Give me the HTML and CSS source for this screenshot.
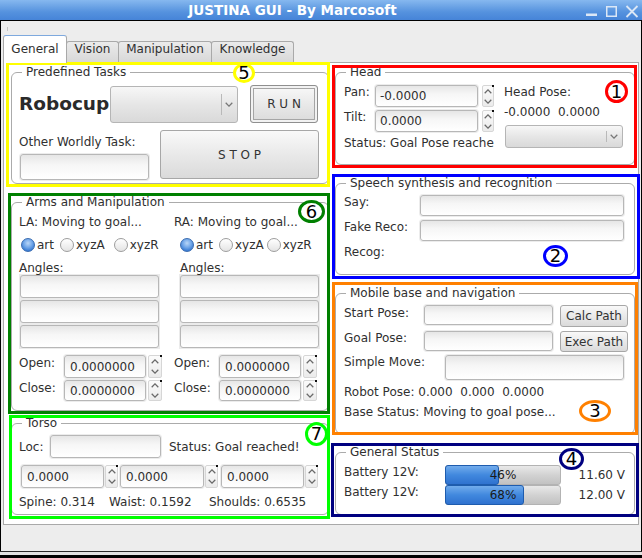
FILE: index.html
```html
<!DOCTYPE html>
<html>
<head>
<meta charset="utf-8">
<title>JUSTINA GUI - By Marcosoft</title>
<link rel="stylesheet" href="styles.css">
</head>
<body>
<div class="window">
  <div class="titlebar">
    <div class="title">JUSTINA GUI - By Marcosoft</div>
    <svg class="wbtns" width="57" height="20" viewBox="0 0 57 20">
      <rect x="1" y="13.5" width="11" height="2.5" fill="#dbe7f6"/>
      <rect x="21.75" y="6.75" width="9.5" height="9.5" fill="none" stroke="#dbe7f6" stroke-width="1.5"/>
      <path d="M41.5 6 L52.5 17 M52.5 6 L41.5 17" stroke="#dbe7f6" stroke-width="1.8" fill="none"/>
    </svg>
  </div>
  <div class="client">
    <div class="tabs">
      <div class="tab active t-general">General</div>
      <div class="tab t-vision">Vision</div>
      <div class="tab t-manip">Manipulation</div>
      <div class="tab t-know">Knowledge</div>
    </div>
    <div class="pane">
      <div class="col col-left">
        <fieldset class="grp tasks">
          <legend>Predefined Tasks</legend>
          <div class="gbody">
            <div class="tasks-top">
              <div class="robocup">Robocup</div>
              <div class="combo c-task"><span class="sep"></span><svg class="chev" width="8" height="5" viewBox="0 0 8 5"><path d="M0.7 0.8 L4 4.1 L7.3 0.8" fill="none" stroke="#777" stroke-width="1.3"/></svg></div>
              <div class="btn btn-run">R U N</div>
            </div>
            <div class="tasks-bottom">
              <div class="other">
                <div class="other-lbl">Other Worldly Task:</div>
                <div class="inp other-inp"></div>
              </div>
              <div class="btn btn-stop">S T O P</div>
            </div>
          </div>
        </fieldset>

        <fieldset class="grp arms">
          <legend>Arms and Manipulation</legend>
          <div class="gbody arms-body">
            <div class="arm arm-la">
              <div class="line">LA: Moving to goal...</div>
              <div class="radios">
                <span class="ritem"><span class="radio on"></span>art</span>
                <span class="ritem r2"><span class="radio"></span>xyzA</span>
                <span class="ritem r3"><span class="radio"></span>xyzR</span>
              </div>
              <div class="angles-lbl">Angles:</div>
              <div class="angles-box">
                <div class="inp ang"></div>
                <div class="inp ang"></div>
                <div class="inp ang"></div>
              </div>
              <div class="oc-row open-row">
                <div class="oc-lbl">Open:</div>
                <div class="spin s-arm"><div class="field">0.0000000</div><div class="arrows"><svg width="8" height="5" viewBox="0 0 8 5"><path d="M0.7 4.2 L4 0.9 L7.3 4.2" fill="none" stroke="#6a6a6a" stroke-width="1.3"/></svg><svg width="8" height="5" viewBox="0 0 8 5"><path d="M0.7 0.8 L4 4.1 L7.3 0.8" fill="none" stroke="#6a6a6a" stroke-width="1.3"/></svg></div></div>
              </div>
              <div class="oc-row close-row">
                <div class="oc-lbl">Close:</div>
                <div class="spin s-arm s-short"><div class="field">0.0000000</div><div class="arrows"><svg width="8" height="5" viewBox="0 0 8 5"><path d="M0.7 4.2 L4 0.9 L7.3 4.2" fill="none" stroke="#6a6a6a" stroke-width="1.3"/></svg><svg width="8" height="5" viewBox="0 0 8 5"><path d="M0.7 0.8 L4 4.1 L7.3 0.8" fill="none" stroke="#6a6a6a" stroke-width="1.3"/></svg></div></div>
              </div>
            </div>
            <div class="arm arm-ra">
              <div class="line">RA: Moving to goal...</div>
              <div class="radios">
                <span class="ritem"><span class="radio on"></span>art</span>
                <span class="ritem r2"><span class="radio"></span>xyzA</span>
                <span class="ritem r3"><span class="radio"></span>xyzR</span>
              </div>
              <div class="angles-lbl">Angles:</div>
              <div class="angles-box">
                <div class="inp ang"></div>
                <div class="inp ang"></div>
                <div class="inp ang"></div>
              </div>
              <div class="oc-row open-row">
                <div class="oc-lbl">Open:</div>
                <div class="spin s-arm"><div class="field">0.0000000</div><div class="arrows"><svg width="8" height="5" viewBox="0 0 8 5"><path d="M0.7 4.2 L4 0.9 L7.3 4.2" fill="none" stroke="#6a6a6a" stroke-width="1.3"/></svg><svg width="8" height="5" viewBox="0 0 8 5"><path d="M0.7 0.8 L4 4.1 L7.3 0.8" fill="none" stroke="#6a6a6a" stroke-width="1.3"/></svg></div></div>
              </div>
              <div class="oc-row close-row">
                <div class="oc-lbl">Close:</div>
                <div class="spin s-arm s-short"><div class="field">0.0000000</div><div class="arrows"><svg width="8" height="5" viewBox="0 0 8 5"><path d="M0.7 4.2 L4 0.9 L7.3 4.2" fill="none" stroke="#6a6a6a" stroke-width="1.3"/></svg><svg width="8" height="5" viewBox="0 0 8 5"><path d="M0.7 0.8 L4 4.1 L7.3 0.8" fill="none" stroke="#6a6a6a" stroke-width="1.3"/></svg></div></div>
              </div>
            </div>
          </div>
        </fieldset>

        <fieldset class="grp torso">
          <legend>Torso</legend>
          <div class="gbody">
            <div class="frow">
              <div class="loc-lbl">Loc:</div>
              <div class="inp loc-inp"></div>
              <div class="torso-status">Status: Goal reached!</div>
            </div>
            <div class="frow torso-spins">
              <div class="spin s-t1"><div class="field">0.0000</div><div class="arrows"><svg width="8" height="5" viewBox="0 0 8 5"><path d="M0.7 4.2 L4 0.9 L7.3 4.2" fill="none" stroke="#6a6a6a" stroke-width="1.3"/></svg><svg width="8" height="5" viewBox="0 0 8 5"><path d="M0.7 0.8 L4 4.1 L7.3 0.8" fill="none" stroke="#6a6a6a" stroke-width="1.3"/></svg></div></div>
              <div class="spin s-t2"><div class="field">0.0000</div><div class="arrows"><svg width="8" height="5" viewBox="0 0 8 5"><path d="M0.7 4.2 L4 0.9 L7.3 4.2" fill="none" stroke="#6a6a6a" stroke-width="1.3"/></svg><svg width="8" height="5" viewBox="0 0 8 5"><path d="M0.7 0.8 L4 4.1 L7.3 0.8" fill="none" stroke="#6a6a6a" stroke-width="1.3"/></svg></div></div>
              <div class="spin s-t3"><div class="field">0.0000</div><div class="arrows"><svg width="8" height="5" viewBox="0 0 8 5"><path d="M0.7 4.2 L4 0.9 L7.3 4.2" fill="none" stroke="#6a6a6a" stroke-width="1.3"/></svg><svg width="8" height="5" viewBox="0 0 8 5"><path d="M0.7 0.8 L4 4.1 L7.3 0.8" fill="none" stroke="#6a6a6a" stroke-width="1.3"/></svg></div></div>
            </div>
            <div class="frow torso-vals">
              <span class="tv-spine">Spine: 0.314</span>
              <span class="tv-waist">Waist: 0.1592</span>
              <span>Shoulds: 0.6535</span>
            </div>
          </div>
        </fieldset>
      </div>

      <div class="col col-right">
        <fieldset class="grp head">
          <legend>Head</legend>
          <div class="gbody head-body">
            <div class="head-left">
              <div class="frow">
                <div class="hl">Pan:</div>
                <div class="spin s-head"><div class="field">-0.0000</div><div class="arrows"><svg width="8" height="5" viewBox="0 0 8 5"><path d="M0.7 4.2 L4 0.9 L7.3 4.2" fill="none" stroke="#6a6a6a" stroke-width="1.3"/></svg><svg width="8" height="5" viewBox="0 0 8 5"><path d="M0.7 0.8 L4 4.1 L7.3 0.8" fill="none" stroke="#6a6a6a" stroke-width="1.3"/></svg></div></div>
              </div>
              <div class="frow tilt-row">
                <div class="hl">Tilt:</div>
                <div class="spin s-head"><div class="field">0.0000</div><div class="arrows"><svg width="8" height="5" viewBox="0 0 8 5"><path d="M0.7 4.2 L4 0.9 L7.3 4.2" fill="none" stroke="#6a6a6a" stroke-width="1.3"/></svg><svg width="8" height="5" viewBox="0 0 8 5"><path d="M0.7 0.8 L4 4.1 L7.3 0.8" fill="none" stroke="#6a6a6a" stroke-width="1.3"/></svg></div></div>
              </div>
              <div class="head-status">Status: Goal Pose reache</div>
            </div>
            <div class="head-right">
              <div>Head Pose:</div>
              <div class="hp-vals">-0.0000  0.0000</div>
              <div class="combo c-head"><span class="sep"></span><svg class="chev" width="8" height="5" viewBox="0 0 8 5"><path d="M0.7 0.8 L4 4.1 L7.3 0.8" fill="none" stroke="#777" stroke-width="1.3"/></svg></div>
            </div>
          </div>
        </fieldset>

        <fieldset class="grp speech">
          <legend>Speech synthesis and recognition</legend>
          <div class="gbody">
            <div class="frow">
              <div class="sl">Say:</div>
              <div class="inp say-inp"></div>
            </div>
            <div class="frow fake-row">
              <div class="sl">Fake Reco:</div>
              <div class="inp say-inp"></div>
            </div>
            <div class="recog">Recog:</div>
          </div>
        </fieldset>

        <fieldset class="grp mobile">
          <legend>Mobile base and navigation</legend>
          <div class="gbody">
            <div class="frow">
              <div class="ml">Start Pose:</div>
              <div class="inp pose-inp"></div>
              <div class="btn path-btn">Calc Path</div>
            </div>
            <div class="frow goal-row">
              <div class="ml ml0">Goal Pose:</div>
              <div class="inp pose-inp"></div>
              <div class="btn path-btn exec">Exec Path</div>
            </div>
            <div class="frow move-row">
              <div class="ml ml-wide">Simple Move:</div>
              <div class="inp move-inp"></div>
            </div>
            <div class="robot-pose">Robot Pose: 0.000  0.000  0.0000</div>
            <div class="base-status">Base Status: Moving to goal pose...</div>
          </div>
        </fieldset>

        <fieldset class="grp gstatus">
          <legend>General Status</legend>
          <div class="gbody">
            <div class="gs-row">
              <div class="gs-lbl">Battery 12V:</div>
              <div class="bar"><div class="chunk c46"></div><span class="bar-txt">46%</span></div>
              <div class="gs-val">11.60 V</div>
            </div>
            <div class="gs-row">
              <div class="gs-lbl">Battery 12V:</div>
              <div class="bar"><div class="chunk c68"></div><span class="bar-txt">68%</span></div>
              <div class="gs-val">12.00 V</div>
            </div>
          </div>
        </fieldset>
      </div>

      <div class="ann a-yellow"></div>
      <div class="ann a-dgreen"></div>
      <div class="ann a-lgreen"></div>
      <div class="ann a-red"></div>
      <div class="ann a-blue"></div>
      <div class="ann a-orange"></div>
      <div class="ann a-navy"></div>

      <div class="num n5">5</div>
      <div class="num n1">1</div>
      <div class="num n6">6</div>
      <div class="num n2">2</div>
      <div class="num n3">3</div>
      <div class="num n4">4</div>
      <div class="num n7">7</div>
    </div>
  </div>
  <div class="frame-bottom"></div>
</div>
</body>
</html>
```

FILE: styles.css
```css
* { box-sizing: border-box; }

body {
  margin: 0;
  font-family: "DejaVu Sans", "Liberation Sans", sans-serif;
  font-size: 12px;
  line-height: 14px;
  color: #303030;
  background: #ededed;
}

.window {
  width: 642px;
  height: 558px;
  background: #ededed;
  overflow: hidden;
}

/* title bar */
.titlebar {
  height: 21px;
  display: flex;
  background: linear-gradient(#86b8ef, #5592de 60%, #4684d8);
  border-bottom: 1px solid #000;
}
.title {
  width: 585px;
  text-align: center;
  color: #fff;
  font-weight: bold;
  font-size: 13.5px;
  line-height: 20px;
}
.wbtns { display: block; }

/* client */
.client {
  height: 530px;
  border-left: 1px solid #000;
  border-right: 1px solid #000;
  padding: 14px 0 0 2px;
  background: linear-gradient(#c4c4c4, #c4c4c4) 6px 6px / 1px 4px no-repeat, #ededed;
}

.tabs {
  display: flex;
  align-items: flex-end;
  height: 28px;
  margin-bottom: -1px;
  position: relative;
  z-index: 1;
}
.tab {
  height: 21px;
  margin-bottom: 1px;
  border: 1px solid #a9a9a9;
  border-bottom: none;
  border-radius: 3px 3px 0 0;
  background: linear-gradient(#ebebeb, #d8d8d8);
  text-align: center;
  line-height: 14px;
  padding-top: 0;
  margin-left: -1px;
}
.tab.active {
  height: 28px;
  margin-bottom: 0;
  margin-left: 0;
  padding-top: 6px;
  background: #fff;
  border-color: #9fb8d8 #a9a9a9 #a9a9a9 #a9a9a9;
  border-top: 1px solid #7ea9de;
  position: relative;
  z-index: 2;
}
.t-general { width: 64px; }
.t-vision { width: 53px; }
.t-manip { width: 94px; }
.t-know { width: 83px; }

.pane {
  position: relative;
  width: 636px;
  height: 463px;
  border: 1px solid #a9a9a9;
  background: #fff;
  display: flex;
  align-items: flex-start;
  padding: 2px 0 0 7px;
}

.col { display: flex; flex-direction: column; }
.col-left { width: 318px; }
.col-right { width: 300px; margin-left: 6px; }

/* group boxes */
.grp {
  margin: 0;
  padding: 0;
  min-width: 0;
  border: 1px solid #ababab;
  border-radius: 6px;
}
.grp legend {
  padding: 0 4px;
  margin-left: 10px;
  line-height: 15px;
  font-size: 12px;
}
.gbody { padding: 5px 0 0 7px; }
.col-right .gbody { padding-left: 8px; }

.tasks { height: 119px; }
.arms { height: 216px; margin-top: 11px; }
.torso { height: 99px; margin-top: 5px; }
.head { height: 100px; }
.speech { height: 99px; margin-top: 11px; }
.mobile { height: 148px; margin-top: 11px; }
.gstatus { height: 70px; margin-top: 11px; }

.speech .gbody, .mobile .gbody, .torso .gbody { padding-top: 4px; }

.frow { display: flex; align-items: flex-start; }

/* widgets */
.inp {
  border: 1px solid #b7b7b7;
  border-radius: 3px;
  background: linear-gradient(#e6e6e6, #f6f6f6 40%, #fff);
  box-shadow: 0 0 0 1px #ececec;
}
.btn {
  border: 1px solid #a7a7a7;
  border-radius: 3px;
  background: linear-gradient(#f9f9f9, #e9e9e9 50%, #dadada);
  display: flex;
  align-items: center;
  justify-content: center;
  color: #333;
  white-space: pre;
}
.combo {
  display: flex;
  align-items: center;
  justify-content: flex-end;
  border: 1px solid #b5b5b5;
  border-radius: 3px;
  background: linear-gradient(#f7f7f7, #e6e6e6 50%, #d9d9d9);
}
.combo .sep {
  width: 1px;
  align-self: stretch;
  margin: 7px 0;
  background: #b9b9b9;
}
.combo .chev { margin: 0 4px 0 3px; display: block; }

.spin { display: flex; }
.spin .field {
  flex: 1;
  border: 1px solid #b7b7b7;
  border-radius: 3px;
  background: linear-gradient(#e6e6e6, #f6f6f6 40%, #fff);
  box-shadow: 0 0 0 1px #ececec;
  padding-left: 4px;
  display: flex;
  align-items: center;
  white-space: nowrap;
  overflow: hidden;
}
.spin .arrows {
  position: relative;
  width: 14px;
  margin-left: 2px;
  border: 1px solid #d6d6d6;
  border-radius: 2px;
  background: linear-gradient(#fbfbfb, #ebebeb);
  display: flex;
  flex-direction: column;
  justify-content: space-around;
  align-items: center;
}
.spin .arrows svg { display: block; }
.spin .arrows::after {
  content: "";
  position: absolute;
  right: -1px;
  top: -1px;
  width: 2px;
  height: 2px;
  background: #111;
}

.radio {
  display: inline-block;
  width: 14px;
  height: 14px;
  border-radius: 50%;
  border: 1px solid #9d9d9d;
  background: linear-gradient(#ffffff, #e4e4e4);
  margin-right: 2px;
}
.radio.on {
  border-color: #3a6cb0;
  background: radial-gradient(circle at 50% 35%, #b9d6f7 0, #6fa5e8 45%, #3478d2 80%);
}

/* Predefined tasks */
.tasks-top { display: flex; align-items: flex-start; height: 38px; }
.robocup {
  width: 91px;
  font-weight: bold;
  font-size: 18.5px;
  line-height: 38px;
  color: #2a2a2a;
}
.c-task { width: 128px; height: 37px; margin-top: 1px; }
.btn-run {
  width: 68px;
  height: 38px;
  margin-left: 12px;
  border-color: #8f8f8f;
  box-shadow: inset 0 0 0 2px #f2f2f2, inset 0 0 0 3px #a5a5a5;
}
.tasks-bottom { display: flex; margin-top: 7px; }
.other { width: 141px; }
.other-lbl { margin-top: 5px; }
.other-inp { width: 129px; height: 26px; margin: 5px 0 0 1px; }
.btn-stop { width: 159px; height: 49px; }

/* Arms */
.arms-body { display: flex; }
.arm { width: 155px; }
.arm-ra { width: 150px; }
.line { white-space: nowrap; }
.radios { display: flex; align-items: center; height: 14px; margin-top: 9px; margin-left: 2px; }
.arm-ra .radios { margin-left: 6px; }
.ritem { display: flex; align-items: center; }
.arm-la .r2 { margin-left: 6px; }
.arm-la .r3 { margin-left: 9px; }
.arm-ra .r2 { margin-left: 6px; }
.arm-ra .r3 { margin-left: 3px; }
.angles-lbl { margin-top: 9px; }
.arm-ra .angles-lbl { margin-left: 6px; }
.angles-box {
  width: 141px;
  margin-top: -1px;
  padding: 1px;
  background: #ebebeb;
}
.arm-ra .angles-box { margin-left: 5px; }
.ang { height: 23px; box-shadow: none; }
.ang + .ang { margin-top: 2px; }
.oc-row { display: flex; align-items: flex-start; }
.open-row { margin-top: 6px; }
.close-row { margin-top: 2px; }
.oc-lbl { width: 45px; padding-top: 1px; }
.s-arm { width: 98px; height: 23px; }
.s-arm.s-short { height: 21px; }
.s-arm .field { padding-left: 5px; }

/* Torso */
.loc-lbl { width: 31px; margin-top: 5px; }
.loc-inp { width: 111px; height: 23px; }
.torso-status { margin-left: 8px; margin-top: 5px; white-space: nowrap; }
.torso-spins { margin-top: 7px; }
.s-t1 { width: 97px; height: 23px; margin-left: 2px; }
.s-t2 { width: 98px; height: 23px; margin-left: 2px; }
.s-t3 { width: 97px; height: 23px; margin-left: 3px; }
.torso-spins .field { padding-left: 5px; }
.torso-spins .arrows { width: 13px; margin-left: 1px; }
.torso-vals { margin-top: 7px; white-space: nowrap; }
.tv-spine { width: 90px; }
.tv-waist { width: 100px; }

/* Head */
.head-body { display: flex; }
.head-left { width: 151px; }
.hl { width: 31px; }
.s-head { width: 119px; height: 22px; }
.s-head .arrows { width: 12px; margin-left: 4px; }
.tilt-row { margin-top: 3px; }
.head-status { margin-top: 4px; white-space: nowrap; overflow: hidden; }
.head-right { margin-left: 9px; }
.hp-vals { margin-top: 6px; white-space: pre; }
.c-head { width: 118px; height: 23px; margin: 6px 0 0 1px; }
.c-head .sep { margin: 5px 0; }

/* Speech */
.sl { width: 76px; }
.say-inp { width: 204px; height: 21px; }
.fake-row { margin-top: 4px; }
.recog { margin-top: 4px; }

/* Mobile */
.ml { width: 80px; margin-top: 1px; }
.ml0 { margin-top: 0; }
.ml-wide { width: 101px; margin-top: 0; }
.pose-inp { width: 129px; height: 20px; }
.path-btn { width: 68px; height: 22px; margin-left: 7px; }
.path-btn.exec { height: 21px; }
.goal-row { margin-top: 4px; }
.move-row { margin-top: 3px; }
.move-inp { width: 179px; height: 25px; }
.robot-pose { margin-top: 5px; white-space: pre; }
.base-status { margin-top: 6px; white-space: nowrap; }

/* General status */
.gs-row { display: flex; height: 20px; }
.gs-lbl { width: 101px; }
.bar {
  position: relative;
  width: 116px;
  height: 20px;
  border: 1px solid #b3b3b3;
  border-radius: 3px;
  background: linear-gradient(#e9e9e9, #d2d2d2 50%, #c2c2c2);
}
.chunk {
  height: 20px;
  margin: -1px 0 0 -1px;
  border: 1px solid #1e5cae;
  border-radius: 3px;
  background: linear-gradient(#72acec, #4188de 50%, #2f72cf);
}
.c46 { width: 54px; }
.c68 { width: 79px; }
.bar-txt {
  position: absolute;
  left: 0;
  right: 0;
  top: 2px;
  text-align: center;
  color: #1a1a1a;
}
.gs-val { width: 64px; text-align: right; line-height: 20px; }

/* annotations drawn over the screenshot */
.ann {
  position: absolute;
  border: 3px solid;
  pointer-events: none;
}
.a-yellow { left: 2px; top: -1px; width: 324px; height: 125px; border-color: #ffff00; }
.a-dgreen { left: 4px; top: 130px; width: 322px; height: 221px; border-color: #008000; }
.a-lgreen { left: 5px; top: 352px; width: 321px; height: 104px; border-color: #00ff00; }
.a-red { left: 328px; top: 2px; width: 305px; height: 103px; border-color: #ff0000; }
.a-blue { left: 328px; top: 111px; width: 308px; height: 105px; border-color: #0000ff; }
.a-orange { left: 328px; top: 219px; width: 306px; height: 153px; border-color: #ff8000; }
.a-navy { left: 327px; top: 380px; width: 308px; height: 74px; border-color: #000080; }

.num {
  position: absolute;
  border: 3px solid;
  border-radius: 50%;
  background: #fff;
  color: #000;
  font-size: 18px;
  display: flex;
  align-items: center;
  justify-content: center;
  line-height: 1;
}
.n5 { left: 229px; top: 0; width: 22px; height: 20px; border-color: #ffff00; }
.n1 { left: 601px; top: 17px; width: 23px; height: 23px; border-color: #ff0000; }
.n6 { left: 294px; top: 137px; width: 27px; height: 23px; border-color: #008000; }
.n2 { left: 539px; top: 182px; width: 25px; height: 22px; border-color: #0000ff; }
.n3 { left: 575px; top: 337px; width: 32px; height: 22px; border-color: #ff8000; }
.n4 { left: 555px; top: 385px; width: 25px; height: 22px; border-color: #000080; }
.n7 { left: 301px; top: 359px; width: 23px; height: 24px; border-color: #00ff00; }

.frame-bottom {
  height: 7px;
  border-top: 1px solid #2a2a2a;
  border-bottom: 3px solid #000;
  background: #e2e2e2;
}
```
